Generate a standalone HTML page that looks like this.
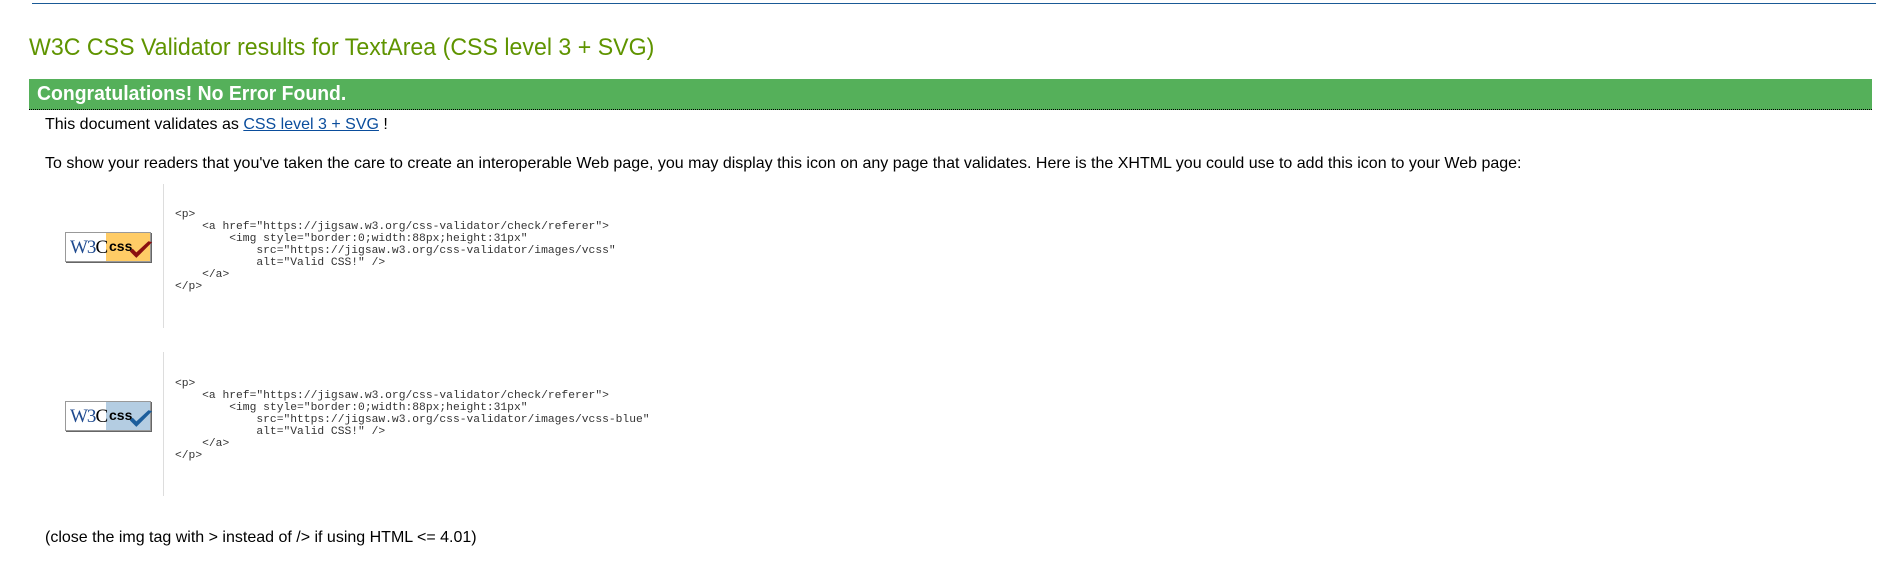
<!DOCTYPE html>
<html><head><meta charset="utf-8"><style>
body{margin:0;width:1880px;height:563px;background:#fff;position:relative;overflow:hidden;font-family:"Liberation Sans",Arial,sans-serif;color:#000}
.a{position:absolute;white-space:nowrap}
.topline{left:32px;top:3px;width:1844px;height:1px;background:#1a5a96}
h2{position:absolute;left:29px;top:34px;margin:0;font-weight:normal;font-size:24px;color:#5f9400;white-space:nowrap;transform:scaleX(0.965);transform-origin:0 0}
.bar{left:29px;top:79px;width:1843px;height:30px;background:#55b05a;border-bottom:1px dotted #000}
.bar span{position:absolute;left:8px;top:4px;color:#fff;font-weight:bold;font-size:20px;transform:scaleX(0.97);transform-origin:0 0}
.t{font-size:16px}
a{color:#0a4d9c;text-decoration:underline}
.vl{width:1px;background:#ddd;left:163px}
pre{position:absolute;left:175px;margin:0;font-family:"Liberation Mono",monospace;font-size:11.3px;line-height:12px;color:#333}
.badge{position:absolute;left:65px;width:84px;height:28px;border:1px solid #999;background:#fff;box-shadow:1px 1px 0 #666}
.badge .l{position:absolute;left:4px;top:4px;font-family:"Liberation Serif",serif;font-size:19px;color:#1f4a8f;letter-spacing:-1px}
.badge .l b{color:#000;font-weight:normal}
.badge .r{position:absolute;left:40px;top:0;width:44px;height:28px}
.badge .c{position:absolute;left:43px;top:5px;font-weight:bold;font-size:14px}
</style></head><body>
<div class="a topline"></div>
<h2>W3C CSS Validator results for TextArea (CSS level 3 + SVG)</h2>
<div class="a bar"><span>Congratulations! No Error Found.</span></div>
<div class="a t" style="left:45px;top:116px">This document validates as <a>CSS level 3 + SVG</a> !</div>
<div class="a t" style="left:45px;top:155px">To show your readers that you've taken the care to create an interoperable Web page, you may display this icon on any page that validates. Here is the XHTML you could use to add this icon to your Web page:</div>

<div class="a vl" style="top:184px;height:144px"></div>
<div class="badge" style="top:232px"><div class="r" style="background:#fc6"></div><span class="l">W3<b>C</b></span><span class="c">css</span>
<svg style="position:absolute;left:62px;top:7px" width="26" height="21" viewBox="0 0 28 22"><path d="M2 12 L9 19 L26 2 L22 1 L9 13 L5 9 Z" fill="#8b1010"/></svg></div>
<pre style="top:209px">&lt;p&gt;
    &lt;a href="https://jigsaw.w3.org/css-validator/check/referer"&gt;
        &lt;img style="border:0;width:88px;height:31px"
            src="https://jigsaw.w3.org/css-validator/images/vcss"
            alt="Valid CSS!" /&gt;
    &lt;/a&gt;
&lt;/p&gt;</pre>

<div class="a vl" style="top:352px;height:144px"></div>
<div class="badge" style="top:401px"><div class="r" style="background:#b4cde2"></div><span class="l">W3<b>C</b></span><span class="c">css</span>
<svg style="position:absolute;left:62px;top:7px" width="26" height="21" viewBox="0 0 28 22"><path d="M2 12 L9 19 L26 2 L22 1 L9 13 L5 9 Z" fill="#1c5e9c"/></svg></div>
<pre style="top:378px">&lt;p&gt;
    &lt;a href="https://jigsaw.w3.org/css-validator/check/referer"&gt;
        &lt;img style="border:0;width:88px;height:31px"
            src="https://jigsaw.w3.org/css-validator/images/vcss-blue"
            alt="Valid CSS!" /&gt;
    &lt;/a&gt;
&lt;/p&gt;</pre>

<div class="a t" style="left:45px;top:529px">(close the img tag with &gt; instead of /&gt; if using HTML &lt;= 4.01)</div>
</body></html>
